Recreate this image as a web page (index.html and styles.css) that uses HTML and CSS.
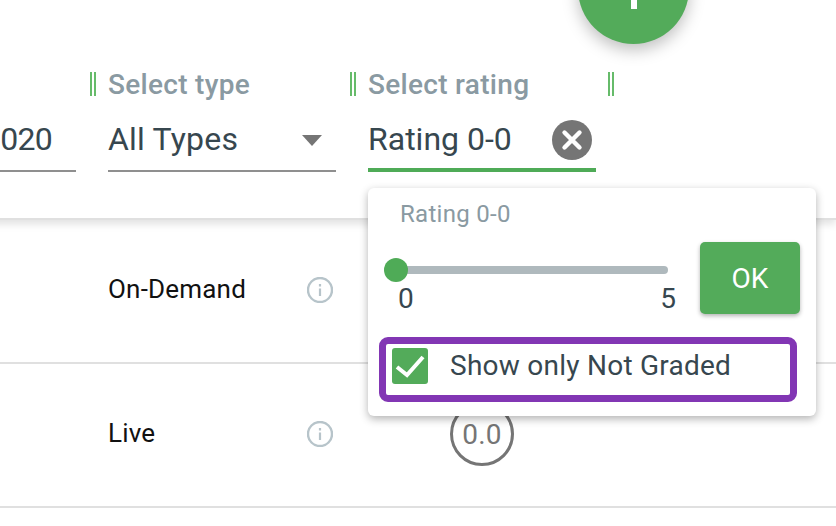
FILE: index.html
```html
<!DOCTYPE html>
<html lang="en">
<head>
  <meta charset="UTF-8" />
  <title>Select rating</title>
  <link rel="stylesheet" href="styles.css">
</head>
<body>
  <div class="fab"><span class="fab-plus"></span></div>

  <section class="filters">
    <div class="filter filter-date">
      <div class="filter-label">&nbsp;</div>
      <div class="filter-field"><span>020</span></div>
    </div>
    <div class="filter">
      <div class="filter-label">Select type</div>
      <div class="filter-field">
        <span>All Types</span>
        <span class="caret"></span>
      </div>
    </div>
    <div class="filter filter-last">
      <div class="filter-label">Select rating</div>
      <div class="filter-field filter-active">
        <span>Rating 0-0</span>
        <svg class="clear-icon" viewBox="0 0 40 40" width="40" height="40">
          <circle cx="20" cy="20" r="20" fill="#757575" />
          <path d="M12.5 12.5l15 15M27.5 12.5l-15 15" stroke="#fff" stroke-width="4.4" stroke-linecap="round" />
        </svg>
      </div>
    </div>
  </section>

  <section class="rows">
    <div class="row">
      <span class="row-type">On-Demand</span>
      <svg class="info-icon" viewBox="0 0 26 26" width="26" height="26">
        <circle cx="13" cy="13" r="12" fill="none" stroke="#b7c4ca" stroke-width="2.4" />
        <path d="M13 11.5v7.5M13 7v2.4" stroke="#b7c4ca" stroke-width="2.2" />
      </svg>
    </div>
    <div class="row">
      <span class="row-type">Live</span>
      <svg class="info-icon" viewBox="0 0 26 26" width="26" height="26">
        <circle cx="13" cy="13" r="12" fill="none" stroke="#b7c4ca" stroke-width="2.4" />
        <path d="M13 11.5v7.5M13 7v2.4" stroke="#b7c4ca" stroke-width="2.2" />
      </svg>
      <span class="score">0.0</span>
    </div>
  </section>

  <div class="popover">
    <div class="popover-title">Rating 0-0</div>
    <div class="popover-range">
      <div class="slider">
        <div class="slider-track"><span class="slider-thumb"></span></div>
        <div class="slider-labels"><span>0</span><span>5</span></div>
      </div>
      <button class="ok-button">OK</button>
    </div>
    <label class="not-graded">
      <span class="checkbox">
        <svg viewBox="0 0 36 36" width="36" height="36">
          <path d="M5 19l10 8L31 9" fill="none" stroke="#fff" stroke-width="4" />
        </svg>
      </span>
      <span>Show only Not Graded</span>
    </label>
  </div>
</body>
</html>
```

FILE: styles.css
```css
* {
  box-sizing: border-box;
}
html, body {
  height: 100%;
}
body {
  margin: 0;
  overflow: hidden;
  font-family: 'Roboto', sans-serif;
  background: #fff;
  color: #37474f;
}

/* filter strip */
.filters {
  display: flex;
  height: 220px;
  margin-left: -170px;
  padding-top: 72px;
  border-bottom: 2px solid #e0e0e0;
  box-shadow: 0 4px 8px rgba(0,0,0,0.12);
}
.filter {
  width: 260px;
}
.filter-last {
  width: 264px;
}
.filter-label {
  height: 24px;
  padding-left: 12px;
  border-left: 6px double #66bb6a;
  font-size: 28px;
  font-weight: 500;
  line-height: 26px;
  letter-spacing: 0.3px;
  color: #8a9aa2;
}
.filter-last .filter-label {
  border-right: 6px double #66bb6a;
}
.filter-field {
  display: flex;
  align-items: center;
  justify-content: space-between;
  width: 228px;
  height: 56px;
  margin: 20px 0 0 18px;
  padding-bottom: 6px;
  border-bottom: 2px solid #8f8f8f;
  font-size: 32px;
  line-height: 36px;
  letter-spacing: 0.2px;
}
.filter-field span:first-child {
  margin-top: -2px;
}
.filter-date .filter-field {
  justify-content: flex-end;
  padding-right: 24px;
  letter-spacing: -0.7px;
}
.filter-active {
  padding-bottom: 4px;
  border-bottom: 4px solid #4fab57;
  letter-spacing: 0;
}
.caret {
  width: 0;
  height: 0;
  margin-right: 14px;
  border-left: 10px solid transparent;
  border-right: 10px solid transparent;
  border-top: 11px solid #757575;
}
.clear-icon {
  margin-right: 4px;
}

/* fab */
.fab {
  position: absolute;
  left: 578px;
  top: -67px;
  width: 111px;
  height: 111px;
  border-radius: 50%;
  background: #53ab5a;
  box-shadow: 0 6px 16px rgba(0,0,0,0.25);
}
.fab-plus {
  position: absolute;
  left: 53px;
  top: 41px;
  width: 6px;
  height: 35px;
  background: #fff;
}

/* table rows */
.row {
  display: flex;
  align-items: center;
  height: 144px;
  padding: 0 0 2px 108px;
  border-bottom: 2px solid #e0e0e0;
  font-size: 26px;
  letter-spacing: 0.2px;
  color: #111;
}
.row-type {
  width: 199px;
  margin-top: -2px;
}
.info-icon {
  flex: none;
}
.score {
  display: flex;
  align-items: center;
  justify-content: center;
  width: 64px;
  height: 64px;
  margin-left: 117px;
  border: 3px solid #757575;
  border-radius: 50%;
  font-size: 28px;
  color: #757575;
}

/* rating popover */
.popover {
  position: absolute;
  left: 368px;
  top: 188px;
  width: 448px;
  height: 228px;
  padding: 14px 11px 0;
  border-radius: 6px;
  background: #fff;
  box-shadow: 0 3px 8px rgba(0,0,0,0.3);
}
.popover-title {
  padding-left: 21px;
  font-size: 24px;
  line-height: 24px;
  letter-spacing: 0.3px;
  color: #8a9aa2;
}
.popover-range {
  display: flex;
  margin-top: 16px;
}
.slider {
  width: 321px;
  padding: 24px 0 0 17px;
}
.slider-track {
  position: relative;
  width: 272px;
  height: 8px;
  border-radius: 4px;
  background: #afb9bd;
}
.slider-thumb {
  position: absolute;
  left: -12px;
  top: -8px;
  width: 24px;
  height: 24px;
  border-radius: 50%;
  background: #4fab57;
}
.slider-labels {
  display: flex;
  justify-content: space-between;
  width: 278px;
  margin: 9px 0 0 2px;
  font-size: 28px;
  line-height: 32px;
}
.ok-button {
  width: 100px;
  height: 72px;
  border: none;
  border-radius: 5px;
  background: #53ab5a;
  box-shadow: 0 2px 4px rgba(0,0,0,0.3);
  font-family: inherit;
  font-size: 28px;
  color: #fff;
}
.not-graded {
  display: flex;
  align-items: center;
  gap: 22px;
  width: 418px;
  height: 65px;
  margin-top: 22px;
  padding: 0 0 8px 6px;
  border: 7.5px solid #8236b4;
  border-radius: 9px;
  font-size: 28px;
  letter-spacing: 0.25px;
}
.checkbox {
  display: block;
  width: 36px;
  height: 36px;
  border-radius: 3px;
  background: #53ab5a;
}
.checkbox svg {
  display: block;
}
```
